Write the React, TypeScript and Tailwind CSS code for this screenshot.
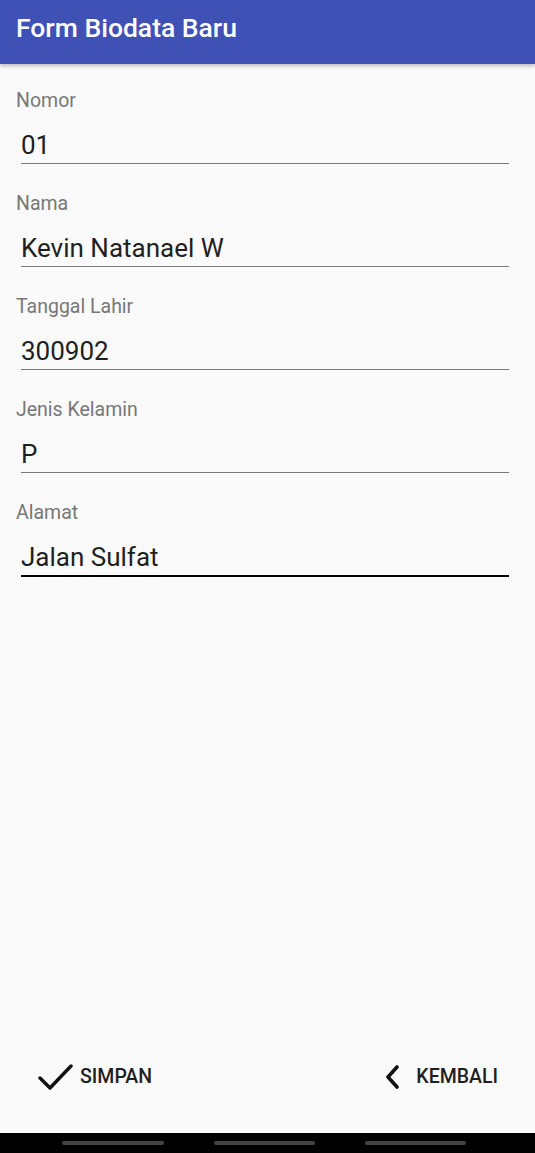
const fields = [
  { label: "Nomor", value: "01" },
  { label: "Nama", value: "Kevin Natanael W" },
  { label: "Tanggal Lahir", value: "300902" },
  { label: "Jenis Kelamin", value: "P" },
  { label: "Alamat", value: "Jalan Sulfat", active: true },
];

const Field = ({ label, value, active }: { label: string; value: string; active?: boolean }) => {
  return (
    <div className="mb-[29px]">
      <div className="pl-[16px] text-[19.5px] leading-[22px] text-[#777777]">{label}</div>
      <div
        className={
          "ml-[21px] mr-[26px] mt-[19px] pb-[4px] text-[26px] leading-[28px] text-[#1f1f1f] " +
          (active ? "border-b-2 border-black" : "border-b border-[#7a7a7a]")
        }
      >
        {value}
      </div>
    </div>
  );
};

export default function App() {
  return (
    <div className="h-[1153px] w-[535px] flex flex-col bg-[#fafafa] font-['Roboto',sans-serif] overflow-hidden">
      {/* App bar */}
      <header className="h-[64px] shrink-0 bg-[#3f51b5] flex items-center px-[16px] shadow-[0_2px_4px_rgba(0,0,0,0.25)] relative z-10">
        <h1 className="text-white text-[26.5px] font-medium leading-none -mt-[7px]">Form Biodata Baru</h1>
      </header>

      {/* Form */}
      <main className="flex-1 pt-[26px]">
        {fields.map((f) => (
          <Field key={f.label} {...f} />
        ))}
      </main>

      {/* Buttons */}
      <footer className="shrink-0 flex justify-between items-center h-[48px] mb-[32px] pl-[38px] pr-[37px]">
        <button className="flex items-center gap-[7px] text-[19.5px] text-[#1f1f1f] font-medium">
          <svg width="35" height="28" viewBox="0 0 35 28" fill="none">
            <path d="M2 15 L12 25 L33 3" stroke="#111" strokeWidth="3.4" strokeLinecap="round" strokeLinejoin="round" />
          </svg>
          SIMPAN
        </button>
        <button className="flex items-center gap-[16px] text-[19.5px] text-[#1f1f1f] font-medium">
          <svg width="16" height="24" viewBox="0 0 16 24" fill="none">
            <path d="M13 2 L4 12 L13 22" stroke="#111" strokeWidth="3.6" strokeLinecap="round" strokeLinejoin="round" />
          </svg>
          KEMBALI
        </button>
      </footer>

      {/* Nav bar */}
      <div className="h-[20px] shrink-0 bg-black flex items-start pt-[8px] pl-[62px] gap-[50px]">
        <div className="h-[4px] w-[102px] rounded-full bg-[#444]" />
        <div className="h-[4px] w-[101px] rounded-full bg-[#444]" />
        <div className="h-[4px] w-[101px] rounded-full bg-[#444]" />
      </div>
    </div>
  );
}
